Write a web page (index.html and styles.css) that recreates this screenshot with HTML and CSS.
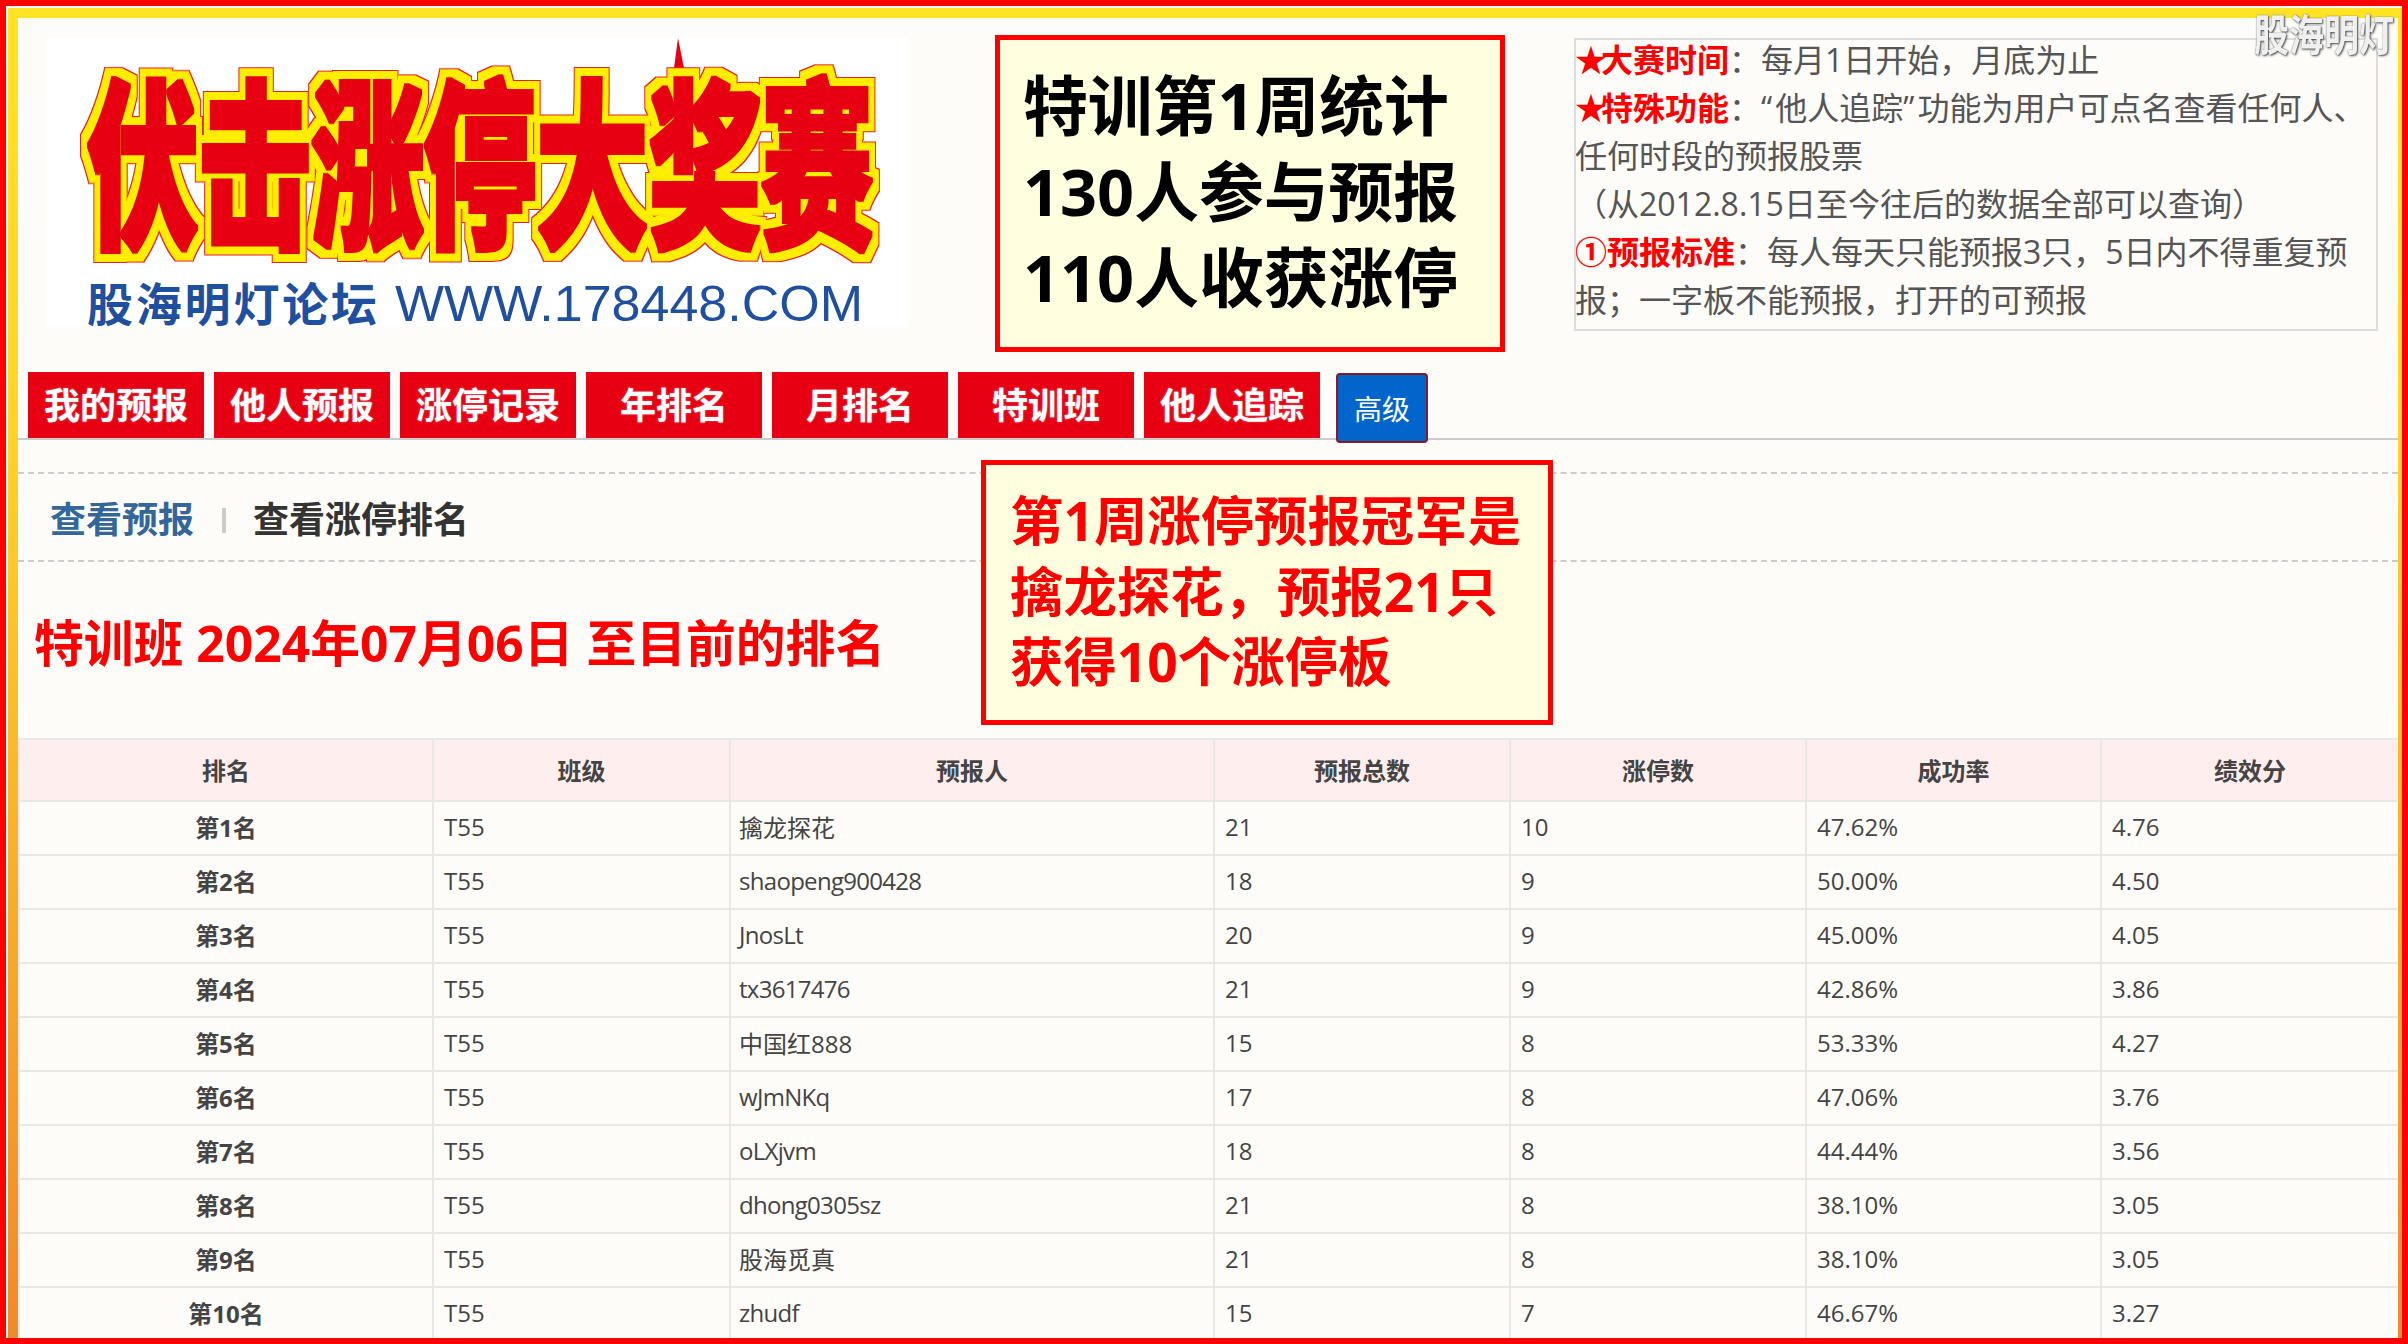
FILE: index.html
```html
<!DOCTYPE html>
<html lang="zh-CN">
<head>
<meta charset="utf-8">
<title>特训班排名</title>
<link rel="stylesheet" href="styles.css">
</head>
<body>
<div class="frame">
  <div class="gap">
    <div class="grad">
      <main class="page">
        <header class="top">
          <svg class="logo" viewBox="0 0 861 289" width="861" height="289" role="img" aria-label="伏击涨停大奖赛">
            <defs>
              <filter id="burst" x="0" y="0" width="861" height="289" filterUnits="userSpaceOnUse" color-interpolation-filters="sRGB">
                <feMorphology in="SourceAlpha" operator="dilate" radius="9 11" result="outerShape"/>
                <feFlood flood-color="#e8202a"/>
                <feComposite in2="outerShape" operator="in" result="outer"/>
                <feMorphology in="SourceAlpha" operator="dilate" radius="8 10" result="midShape"/>
                <feFlood flood-color="#ffee00"/>
                <feComposite in2="midShape" operator="in" result="mid"/>
                <feMorphology in="SourceGraphic" operator="dilate" radius="1.5 2" result="core"/>
                <feMerge>
                  <feMergeNode in="outer"/>
                  <feMergeNode in="mid"/>
                  <feMergeNode in="core"/>
                </feMerge>
              </filter>
            </defs>
            <rect width="861" height="289" fill="#fff"/>
            <polygon points="637,30 631,0 627,30" fill="#e60012"/>
            <g filter="url(#burst)"><text class="logo-title" transform="translate(40 196) scale(1 1.62)" textLength="786" lengthAdjust="spacing">伏击涨停大奖赛</text></g>
            <text class="logo-cn" x="40" y="283" textLength="290">股海明灯论坛</text>
            <text class="logo-url" x="348" y="283" textLength="468" lengthAdjust="spacingAndGlyphs">WWW.178448.COM</text>
          </svg>
          <section class="info">
            <p><b><span class="star">★</span>大赛时间</b>：每月1日开始，月底为止</p>
            <p><b><span class="star">★</span>特殊功能</b>：<span class="quote">“</span>他人追踪<span class="quote">”</span>功能为用户可点名查看任何人、任何时段的预报股票</p>
            <p>（从2012.8.15日至今往后的数据全部可以查询）</p>
            <p><b>①预报标准</b>：每人每天只能预报3只，5日内不得重复预报；一字板不能预报，打开的可预报</p>
          </section>
        </header>

        <nav class="nav">
          <a class="nav-btn">我的预报</a>
          <a class="nav-btn">他人预报</a>
          <a class="nav-btn">涨停记录</a>
          <a class="nav-btn">年排名</a>
          <a class="nav-btn">月排名</a>
          <a class="nav-btn">特训班</a>
          <a class="nav-btn">他人追踪</a>
          <a class="nav-adv">高级</a>
        </nav>

        <div class="tabs">
          <a class="tab tab-link">查看预报</a>
          <span class="tab-sep"></span>
          <a class="tab">查看涨停排名</a>
        </div>

        <h1 class="title">特训班 2024年07月06日 至目前的排名</h1>

        <table class="rank">
          <colgroup>
            <col class="c1"><col class="c2"><col class="c3"><col class="c4"><col class="c5"><col class="c6"><col class="c7">
          </colgroup>
          <thead>
            <tr><th>排名</th><th>班级</th><th>预报人</th><th>预报总数</th><th>涨停数</th><th>成功率</th><th>绩效分</th></tr>
          </thead>
          <tbody>
            <tr><th>第1名</th><td>T55</td><td class="name cjk">擒龙探花</td><td>21</td><td>10</td><td>47.62%</td><td>4.76</td></tr>
            <tr><th>第2名</th><td>T55</td><td class="name">shaopeng900428</td><td>18</td><td>9</td><td>50.00%</td><td>4.50</td></tr>
            <tr><th>第3名</th><td>T55</td><td class="name">JnosLt</td><td>20</td><td>9</td><td>45.00%</td><td>4.05</td></tr>
            <tr><th>第4名</th><td>T55</td><td class="name">tx3617476</td><td>21</td><td>9</td><td>42.86%</td><td>3.86</td></tr>
            <tr><th>第5名</th><td>T55</td><td class="name cjk">中国红888</td><td>15</td><td>8</td><td>53.33%</td><td>4.27</td></tr>
            <tr><th>第6名</th><td>T55</td><td class="name">wJmNKq</td><td>17</td><td>8</td><td>47.06%</td><td>3.76</td></tr>
            <tr><th>第7名</th><td>T55</td><td class="name">oLXjvm</td><td>18</td><td>8</td><td>44.44%</td><td>3.56</td></tr>
            <tr><th>第8名</th><td>T55</td><td class="name">dhong0305sz</td><td>21</td><td>8</td><td>38.10%</td><td>3.05</td></tr>
            <tr><th>第9名</th><td>T55</td><td class="name cjk">股海觅真</td><td>21</td><td>8</td><td>38.10%</td><td>3.05</td></tr>
            <tr><th>第10名</th><td>T55</td><td class="name">zhudf</td><td>15</td><td>7</td><td>46.67%</td><td>3.27</td></tr>
          </tbody>
        </table>

        <aside class="note note-stats">特训第1周统计<br>130人参与预报<br>110人收获涨停</aside>
        <aside class="note note-champ">第1周涨停预报冠军是<br>擒龙探花，预报21只<br>获得10个涨停板</aside>
      </main>
    </div>
  </div>
  <div class="watermark">股海明灯</div>
</div>
</body>
</html>
```

FILE: styles.css
```css
* { box-sizing: border-box; }
html, body { margin: 0; height: 1344px; overflow: hidden; }
body { font-family: "Open Sans", "Noto Sans CJK SC", sans-serif; color: #444; background: #fff; }

.frame { position: relative; height: 1344px; border: 6px solid #f00; }
.gap { height: 100%; padding: 2px 0 0 2px; background: #fff; }
.grad { height: 100%; padding: 10px 4px 0 10px; background: linear-gradient(#ffe324, #ffd52b 30%, #f08a2c); }
.page { position: relative; height: 100%; overflow: hidden; background: #fdfcf8; }

.top { display: flex; height: 354px; padding: 20px 20px 0 29px; justify-content: space-between; align-items: flex-start; }
.logo { display: block; flex: none; }
.logo-title { font-family: "Noto Sans CJK SC", sans-serif; font-weight: 900; font-size: 112px; fill: #e60012; }
.logo-cn { font-family: "Noto Sans CJK SC", sans-serif; font-weight: 700; font-size: 46px; fill: #1f4f9f; }
.logo-url { font-family: "Liberation Sans", sans-serif; font-size: 50px; fill: #1f4f9f; }

.info { width: 804px; height: 293px; padding-bottom: 6px; border: 2px solid #ddd; font-size: 32px; line-height: 48px; color: #555; overflow: hidden; }
.info p { margin: -1px 0 1px -1px; position: relative; top: -3px; }
.info b { color: #f00; }
.star { letter-spacing: -6px; }
.quote { letter-spacing: 3px; }

.nav { display: flex; gap: 10px; height: 68px; padding-left: 10px; border-bottom: 2px solid #ccc; }
.nav-btn { display: flex; width: 176px; height: 66px; padding-bottom: 3px; align-items: center; justify-content: center; background: #e60012; color: #fff; font-size: 36px; font-weight: 700; text-shadow: 0 0 2px rgba(255, 255, 255, .45); }
.nav-adv { display: flex; width: 92px; height: 70px; margin: 1px 0 0 6px; align-items: center; justify-content: center; background: #0066cc; border: 2px solid #8a1a2a; border-radius: 4px; color: #fff; font-size: 28px; }

.tabs { display: flex; height: 90px; margin-top: 32px; padding-left: 32px; align-items: center; border-top: 2px dashed #ccc; border-bottom: 2px dashed #ccc; }
.tab { font-size: 36px; font-weight: 700; color: #333; }
.tab-link { color: #336699; }
.tab-sep { width: 4px; height: 25px; margin: 6px 27px 0 28px; background: #ccc; }

.title { height: 176px; margin: 0; padding: 0 0 0 16px; font-size: 49.8px; line-height: 162px; font-weight: 700; color: #f00; white-space: nowrap; }

.rank { width: 2380px; table-layout: fixed; border-collapse: collapse; font-size: 24px; }
.c1 { width: 414px; } .c2 { width: 297px; } .c3 { width: 484px; } .c4 { width: 296px; }
.c5 { width: 296px; } .c6 { width: 295px; } .c7 { width: 298px; }
.rank th, .rank td { height: 54px; padding: 0 10px 3px; border: 2px solid #e8e8e4; font-weight: 400; color: #444; }
.rank th { text-align: center; font-weight: 700; }
.rank .name { padding-left: 8px; letter-spacing: -0.7px; }
.rank .cjk { letter-spacing: 0; }
.rank thead th { height: 62px; padding-bottom: 1px; background: #ffeeee; }

.note { position: absolute; border: 5px solid #f00; background: #ffffe0; font-weight: 700; white-space: nowrap; }
.note-stats { left: 977px; top: 17px; width: 510px; height: 317px; padding: 22px 0 0 23px; font-size: 64.8px; line-height: 86px; color: #000; }
.note-champ { left: 963px; top: 442px; width: 572px; height: 265px; padding: 21px 0 0 24px; font-size: 53.4px; line-height: 70.5px; color: #f00; }

.watermark { position: absolute; right: 8px; top: 5px; font-family: "Noto Sans CJK SC", sans-serif; font-size: 35px; font-weight: 700; line-height: 42px; color: #f0f0f0; text-shadow: 1px 1px 2px #444, 0 0 1px #666; transform: scaleY(1.25); }
```
